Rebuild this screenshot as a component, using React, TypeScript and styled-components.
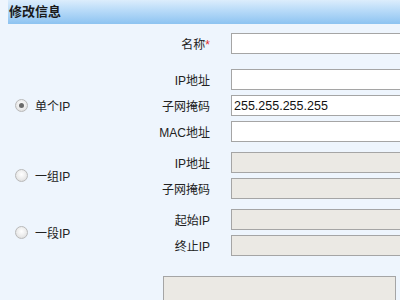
import styled, { createGlobalStyle } from "styled-components";

const GlobalStyle = createGlobalStyle`
  html, body {
    margin: 0;
    padding: 0;
    background: #eef5fd;
  }
  body {
    font-family: "Liberation Sans", Arial, "Noto Sans CJK SC", sans-serif;
    color: #222;
  }
`;

const StyledPage = styled.div`
  padding-left: 8px;
  width: 392px;
  height: 300px;
  overflow: hidden;
`;

const Header = styled.div`
  height: 24px;
  line-height: 24px;
  padding-left: 1px;
  font-size: 13px;
  font-weight: bold;
  color: #1a1a1a;
  background: linear-gradient(to bottom, #dcedfc 0%, #b7daf8 45%, #8dc3f1 100%);
`;

const Form = styled.div`
  padding-top: 9px;
  display: flex;
  flex-direction: column;
`;

const Row = styled.div<{ $gap?: number }>`
  display: flex;
  align-items: center;
  margin-top: ${(p) => p.$gap ?? 0}px;
`;

const RadioCell = styled.label`
  width: 142px;
  flex-shrink: 0;
  display: flex;
  align-items: center;
  gap: 7px;
  padding-left: 7px;
  box-sizing: border-box;
  font-size: 12px;
  color: #222;
`;

const Radio = styled.span<{ $checked?: boolean }>`
  width: 13px;
  height: 13px;
  border-radius: 50%;
  box-sizing: border-box;
  border: 1px solid #b9b9b9;
  background: radial-gradient(circle at 50% 40%, #ffffff 0%, #e9e9e9 60%, #d2d2d2 100%);
  display: flex;
  align-items: center;
  justify-content: center;
  &::after {
    content: "";
    width: 5px;
    height: 5px;
    border-radius: 50%;
    background: ${(p) => (p.$checked ? "#6a6a6a" : "transparent")};
  }
`;

const Fields = styled.div`
  display: flex;
  flex-direction: column;
  gap: 5px;
  flex-shrink: 0;
`;

const FieldRow = styled.div<{ $indent?: boolean }>`
  display: flex;
  align-items: center;
  margin-left: ${(p) => (p.$indent ? "142px" : "0")};
`;

const Label = styled.span`
  width: 70px;
  flex-shrink: 0;
  padding-right: 10px;
  box-sizing: border-box;
  text-align: right;
  font-size: 12px;
  color: #222;
  white-space: nowrap;
`;

const Star = styled.span`
  color: #e03030;
`;

const Input = styled.input<{ $disabled?: boolean }>`
  margin-left: 11px;
  width: 200px;
  flex-shrink: 0;
  height: 21px;
  box-sizing: border-box;
  border: 1px solid #a5a5a5;
  background: ${(p) => (p.$disabled ? "#ebe9e4" : "#ffffff")};
  padding: 0 2px;
  font-family: "Liberation Sans", Arial, sans-serif;
  font-size: 12.5px;
  color: #111;
  outline: none;
`;

const NoteBox = styled.div`
  margin-left: 155px;
  margin-top: 20px;
  width: 231px;
  height: 40px;
  border: 1px solid #a5a5a5;
  background: #ebe9e4;
`;

interface Field {
  label: string;
  value?: string;
}

interface GroupProps {
  title: string;
  checked?: boolean;
  fields: Field[];
  gap: number;
}

function IpGroup({ title, checked, fields, gap }: GroupProps) {
  return (
    <Row $gap={gap}>
      <RadioCell>
        <Radio $checked={checked} />
        {title}
      </RadioCell>
      <Fields>
        {fields.map((f) => (
          <FieldRow key={f.label}>
            <Label>{f.label}</Label>
            <Input $disabled={!checked} readOnly defaultValue={f.value ?? ""} />
          </FieldRow>
        ))}
      </Fields>
    </Row>
  );
}

export default function App() {
  return (
    <StyledPage>
      <GlobalStyle />
      <Header>修改信息</Header>
      <Form>
        <FieldRow $indent>
          <Label>
            名称<Star>*</Star>
          </Label>
          <Input readOnly defaultValue="" />
        </FieldRow>
        <IpGroup
          title="单个IP"
          checked
          gap={15}
          fields={[
            { label: "IP地址" },
            { label: "子网掩码", value: "255.255.255.255" },
            { label: "MAC地址" },
          ]}
        />
        <IpGroup
          title="一组IP"
          gap={10}
          fields={[{ label: "IP地址" }, { label: "子网掩码" }]}
        />
        <IpGroup
          title="一段IP"
          gap={10}
          fields={[{ label: "起始IP" }, { label: "终止IP" }]}
        />
        <NoteBox />
      </Form>
    </StyledPage>
  );
}
